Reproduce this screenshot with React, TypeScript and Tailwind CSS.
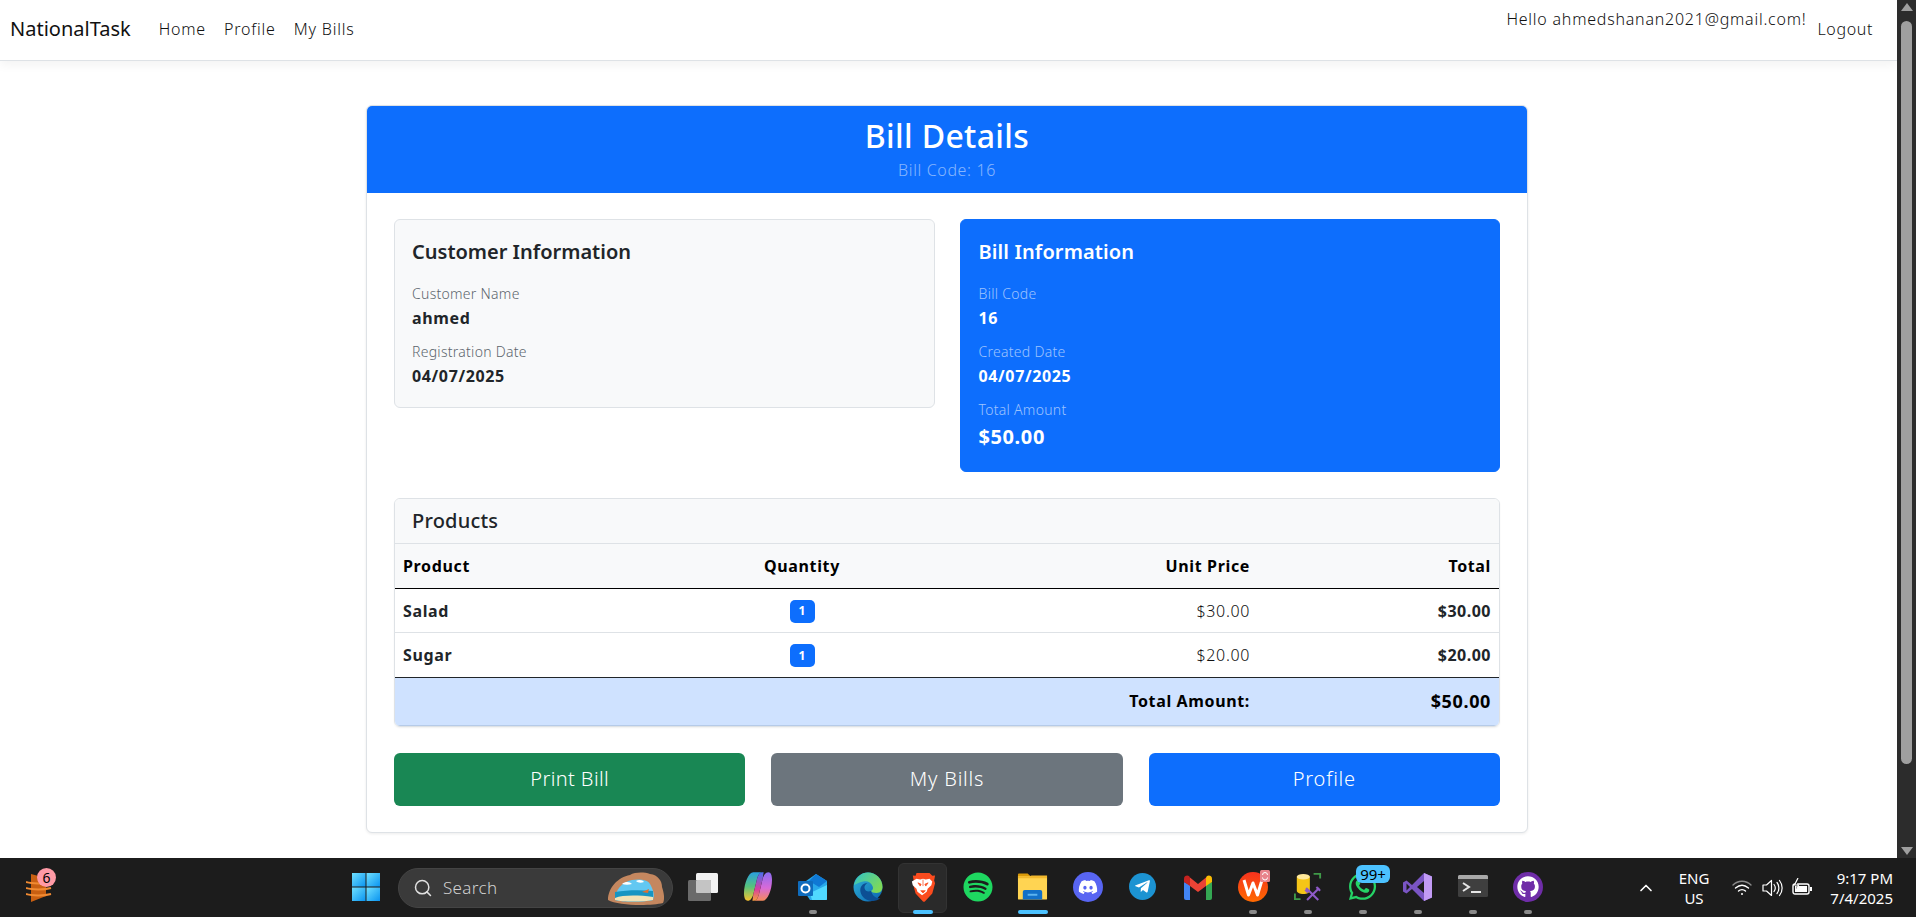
import React from "react";
import { FaDiscord, FaGithub, FaSpotify, FaTelegramPlane, FaWhatsapp } from "react-icons/fa";
import { Search, ChevronUp } from "lucide-react";

const Pip = ({ cls = "w-2 bg-[#8a8a8a]" }: { cls?: string }) => (
  <span className={`absolute bottom-[3px] left-1/2 h-[4px] -translate-x-1/2 rounded-full ${cls}`} />
);

const Slot = ({ children, pip = false, pipCls, active = false }: { children: React.ReactNode; pip?: boolean; pipCls?: string; active?: boolean }) => (
  <div className="relative flex h-[59px] w-[55px] shrink-0 items-center justify-center pb-[2px]">
    {active && <span className="absolute left-[3px] top-[5px] h-[50px] w-[49px] rounded-md border border-[#333] bg-[#2a2a2a]" />}
    <span className="relative flex">{children}</span>
    {pip && <Pip />}
    {pipCls && <Pip cls={pipCls} />}
  </div>
);

const StartIcon = () => (
  <svg width="30" height="30" viewBox="0 0 30 30">
    <defs>
      <linearGradient id="st" x1="0" y1="0" x2="1" y2="1">
        <stop offset="0" stopColor="#6fe0ff" />
        <stop offset="1" stopColor="#0a94f0" />
      </linearGradient>
    </defs>
    <rect x="1" y="1" width="13.5" height="13.5" fill="url(#st)" />
    <rect x="15.5" y="1" width="13.5" height="13.5" fill="url(#st)" />
    <rect x="1" y="15.5" width="13.5" height="13.5" fill="url(#st)" />
    <rect x="15.5" y="15.5" width="13.5" height="13.5" fill="url(#st)" />
  </svg>
);

const TaskView = () => (
  <svg width="30" height="30" viewBox="0 0 30 30">
    <rect x="8" y="1" width="22" height="20" rx="1.5" fill="#f2f2f2" />
    <rect x="0" y="8" width="23" height="21" rx="1.5" fill="#6a6a6a" />
    <rect x="8" y="8" width="15" height="13" rx="1" fill="#c4c4c4" />
  </svg>
);

const Copilot = () => (
  <svg width="28" height="33" viewBox="0 0 30 30" preserveAspectRatio="none">
    <defs>
      <linearGradient id="co1" x1="0" y1="0" x2="0" y2="1">
        <stop offset="0" stopColor="#2a9fe0" />
        <stop offset="0.5" stopColor="#55c27c" />
        <stop offset="1" stopColor="#f8c22e" />
      </linearGradient>
      <linearGradient id="co2" x1="0" y1="0" x2="0" y2="1">
        <stop offset="0" stopColor="#8a6cf2" />
        <stop offset="0.55" stopColor="#d86ad8" />
        <stop offset="1" stopColor="#f58a5a" />
      </linearGradient>
      <linearGradient id="co3" x1="0" y1="0" x2="0" y2="1">
        <stop offset="0" stopColor="#4a6ff0" />
        <stop offset="0.6" stopColor="#d8409e" />
        <stop offset="1" stopColor="#f5a03a" />
      </linearGradient>
    </defs>
    <path d="M10 2h9c-3 1-4 3-5 6l-4 14c-1 3-3 6-6 6-3 0-4-3-4-7C0 12 5 2 10 2z" fill="url(#co1)" />
    <path d="M20 28h-9c3-1 4-3 5-6l4-14c1-3 3-6 6-6 3 0 4 3 4 7 0 9-5 19-10 19z" fill="url(#co2)" />
    <path d="M14 8c1-3 2-5 5-6h2l-1 6-4 14c-1 3-2 5-5 6H9l1-6z" fill="url(#co3)" />
  </svg>
);

const Outlook = () => (
  <svg width="30" height="30" viewBox="0 0 30 30">
    <path d="M8 9l10-7 11 7v18a1 1 0 0 1-1 1H12l-4-6z" fill="#28a8ea" />
    <path d="M18 2l11 7-8 6-10-6z" fill="#0f78d4" />
    <path d="M12 21l17-8v14a1 1 0 0 1-1 1H14z" fill="#50d9ff" />
    <rect x="0" y="9" width="15" height="15" rx="1" fill="#0f6cbd" />
    <circle cx="7.5" cy="16.5" r="4" fill="none" stroke="#fff" strokeWidth="2" />
  </svg>
);

const Edge = () => (
  <svg width="30" height="30" viewBox="0 0 30 30">
    <defs>
      <linearGradient id="ed" x1="0" y1="0" x2="1" y2="1">
        <stop offset="0" stopColor="#2fb6d8" />
        <stop offset="1" stopColor="#0b62b0" />
      </linearGradient>
      <linearGradient id="ed2" x1="0" y1="0" x2="1" y2="0.6">
        <stop offset="0" stopColor="#30c3c8" />
        <stop offset="1" stopColor="#7ed957" />
      </linearGradient>
    </defs>
    <circle cx="15" cy="15" r="14.5" fill="url(#ed)" />
    <path d="M1 13C3 5 9 .5 15 .5 23 .5 29.5 7 29.5 15c0 3-2 6-6 6-3 0-5-1-5.500-2 2-1 2.500-3 1.500-5C18 10 14 8.500 10 9.500 6 10.500 3 12 1 13z" fill="url(#ed2)" />
    <path d="M18 19c-2.500 1-6 .5-6.500-3-.2-2 1-4 3-5-5 0-8 4-7 9 1 5 6 9 12 9 3 0 6-1 8-3-4 1-8-2-9.500-7z" fill="#0c4f94" />
  </svg>
);

const Brave = () => (
  <svg width="26" height="32" viewBox="0 0 28 32">
    <path d="M7 1h14l3 3 3-.5-1 5.500 1 3-3 11-8 8.500a1.500 1.500 0 0 1-2 0l-8-8.500-3-11 1-3-1-5.500 3 .5z" fill="#fb4b1e" />
    <path d="M7 7l4 1 3-1 3 1 4-1 3 3-1 4-4 4-1 3-5 4-5-4-1-3-4-4-1-4z" fill="#fff" />
    <path d="M8.500 11.500l3.500 1.500-1 2zM19.500 11.500L16 13l1 2zM14 8v7M11.500 20h5L14 22.500z" fill="#fb4b1e" stroke="#fb4b1e" strokeWidth="0.8" />
  </svg>
);

const Explorer = () => (
  <svg width="31" height="32" viewBox="0 0 32 32">
    <path d="M1 3a1 1 0 0 1 1-1h9l3 3h16a1 1 0 0 1 1 1v5H1z" fill="#d99a0a" />
    <path d="M1 5h30v23a1 1 0 0 1-1 1H2a1 1 0 0 1-1-1z" fill="#ffd452" />
    <path d="M1 5h12l2-1h16v3H1z" fill="#f1b82d" />
    <path d="M6 31V21a2 2 0 0 1 2-2h16a2 2 0 0 1 2 2v8H6z" fill="#1270c8" />
    <rect x="11" y="23" width="10" height="2" fill="#5db4ef" />
  </svg>
);

const Gmail = () => (
  <svg width="30" height="30" viewBox="0 0 30 30">
    <path d="M1 10v16a2 2 0 0 0 2 2h4V13z" fill="#4285f4" />
    <path d="M23 13v15h4a2 2 0 0 0 2-2V10z" fill="#34a853" />
    <path d="M7 5.500L15 12l8-6.500V14l-8 6-8-6z" fill="#ea4335" />
    <path d="M1 10V6.500c0-2.500 3-4 5-2.500l1 1.500V14z" fill="#c5221f" />
    <path d="M23 5.500L24 4c2-1.500 5 0 5 2.500V10l-6 4z" fill="#fbbc04" />
  </svg>
);

const Wps = () => (
  <svg width="30" height="30" viewBox="0 0 30 30" className="overflow-visible">
    <defs>
      <linearGradient id="wp" x1="0" y1="0" x2="0" y2="1">
        <stop offset="0" stopColor="#f5321e" />
        <stop offset="1" stopColor="#ff6a00" />
      </linearGradient>
    </defs>
    <circle cx="15" cy="15" r="15" fill="url(#wp)" />
    <path d="M6 8l4.500 15L15 11l4.500 12L24 8" fill="none" stroke="#fff" strokeWidth="3" strokeLinejoin="round" />
    <rect x="22" y="-2" width="10" height="12" rx="1.500" fill="#e8848c" />
    <path d="M24.500 3a2.500 2.500 0 0 1 5 0M29.500 5.500a2.500 2.500 0 0 1-5 0" fill="none" stroke="#fff" strokeWidth="1" />
  </svg>
);

const DbTool = () => (
  <svg width="28" height="32" viewBox="0 0 30 32">
    <path d="M21 2h7v5M1 23v6h6" fill="none" stroke="#3f9a48" strokeWidth="2" />
    <path d="M3 5v15c0 2 3 3.500 7 3.500s7-1.500 7-3.500V5z" fill="#f5c518" />
    <ellipse cx="10" cy="5" rx="7" ry="3" fill="#ffe89a" />
    <path d="M13 17l13 13M27 17L14 30M24 16l4 4M12 19l3 3" stroke="#8e5ac8" strokeWidth="2.200" fill="none" />
  </svg>
);

const VisualStudio = () => (
  <svg width="30" height="30" viewBox="0 0 30 30">
    <path d="M21 1l8 3.500v21L21 29 9 17l-5.500 4.500L0 19.500v-9L3.500 8.500 9 13z" fill="#7a55c4" />
    <path d="M21 1l8 3.500v21L21 29z" fill="#c29bf5" />
    <path d="M21 9l-7 6 7 6z" fill="#1c1c1c" />
    <path d="M3.500 11.500v7L7 15z" fill="#1c1c1c" />
  </svg>
);

const Terminal = () => (
  <svg width="30" height="24" viewBox="0 0 30 24">
    <rect x="0" y="0" width="30" height="22" rx="1.500" fill="#3f3f3f" />
    <path d="M1.500 0h27A1.500 1.500 0 0 1 30 1.500V4H0V1.500A1.500 1.500 0 0 1 1.500 0z" fill="#a8a8a8" />
    <path d="M5 8l6 4-6 4" fill="none" stroke="#e6e6e6" strokeWidth="2" />
    <rect x="13" y="16" width="10" height="2" fill="#e6e6e6" />
  </svg>
);

const Beach = () => (
  <svg width="60" height="34" viewBox="0 0 60 34">
    <path d="M2 28C2 16 12 5 24 3c5-3 14-3 20-1 8 1 12 7 12 13 2 6 3 12 1 16-12 3-45 3-55-3z" fill="#c4875f" />
    <path d="M9 28c0-10 7-18 17-20 6-1 15-1 18 4 3 5 5 11 3 16-10 2-30 2-38 0z" fill="#62c8f2" />
    <path d="M9 20c12-2 26-2 38-1v9c-10 2-30 2-38 0z" fill="#1795c2" />
    <path d="M16 12c4-3 8-2 10 0-3 1-7 1-10 0zM30 9c3-2 7-1 8 1-3 1-6 1-8-1z" fill="#fff" />
    <path d="M9 26c8-3 22-3 38-1v3c-10 2-30 2-38 0z" fill="#f2e2b6" />
    <path d="M36 20l7-3-1 4z" fill="#e0702f" />
  </svg>
);

const Widget = () => (
  <div className="relative ml-[26px] h-[30px] w-[26px]">
    <svg width="26" height="30" viewBox="0 0 26 30">
      <path d="M5 1l15 4v18L5 29z" fill="#c85f12" />
      <path d="M0 9c6 2 18 2 25 0M0 15c6 2 18 2 25 0M0 21c6 2 18 2 25 0" stroke="#f08a32" strokeWidth="2" fill="none" />
    </svg>
    <span className="absolute -top-[5px] left-[11px] flex h-[19px] w-[19px] items-center justify-center rounded-full bg-[#ff9aa6] text-[14px] text-black">6</span>
  </div>
);

const WifiIcon = () => (
  <svg width="20" height="18" viewBox="0 0 20 18" fill="none" stroke="#fff" strokeWidth="1.400" strokeLinecap="round">
    <path d="M1 6c5-5 13-5 18 0" stroke="#8a8a8a" />
    <path d="M3.500 9c4-3.500 9-3.500 13 0" />
    <path d="M6.500 12c2-1.800 5-1.800 7 0" />
    <circle cx="10" cy="15" r="1" fill="#fff" stroke="none" />
  </svg>
);

const SpeakerIcon = () => (
  <svg width="21" height="20" viewBox="0 0 21 20" fill="none" stroke="#fff" strokeWidth="1.200">
    <path d="M1 7h3.500L9.500 2.500v15L4.500 13H1z" strokeLinejoin="round" />
    <path d="M12 6.500c1.500 2 1.500 5 0 7M15 4.500c2.500 3 2.500 8 0 11" strokeLinecap="round" />
    <path d="M17.500 2.500c3.500 4.500 3.500 10.500 0 15" strokeLinecap="round" />
  </svg>
);

const BatteryIcon = () => (
  <svg width="21" height="20" viewBox="0 0 21 20" fill="none" stroke="#fff" strokeWidth="1.400">
    <rect x="1" y="6" width="16" height="10" rx="2" />
    <rect x="18" y="9" width="2" height="4" fill="#fff" stroke="none" />
    <rect x="3" y="8" width="12" height="6" fill="#fff" stroke="none" />
    <path d="M6 0L2.500 7H6.500L4 13" stroke="#fff" strokeWidth="1.200" fill="#1c1c1c" />
  </svg>
);

const Field = ({ label, value, tone, big = false }: { label: string; value: string; tone: "light" | "dark"; big?: boolean }) => (
  <div className="mb-[11px]">
    <div className={`mb-[2px] text-[14px] leading-[21px] font-light tracking-[0.02em] ${tone === "light" ? "text-[#5c656d]" : "text-white/60"}`}>{label}</div>
    <div className={`font-bold ${big ? "text-[20px] leading-[30px] tracking-[0.03em]" : "text-[16px] leading-[24px] tracking-[0.04em]"} ${tone === "light" ? "text-[#212529]" : "text-white"}`}>{value}</div>
  </div>
);

const Row = ({ name, price, last = false }: { name: string; price: string; last?: boolean }) => (
  <tr className={`border-b ${last ? "h-[45px] border-[#212529]" : "h-[44px] border-[#dee2e6]"}`}>
    <td className="px-2 pt-[1px] font-bold tracking-[0.04em]">{name}</td>
    <td className="px-2 text-center">
      <span className="inline-flex h-[23px] w-[25px] items-center justify-center rounded-[5px] bg-[#0d6efd] text-[12px] font-bold text-white">1</span>
    </td>
    <td className="px-2 pt-[1px] text-right font-light tracking-[0.04em] text-[#111]">{price}</td>
    <td className="px-2 pt-[1px] text-right font-bold tracking-[0.03em]">{price}</td>
  </tr>
);

export default function App() {
  return (
    <div className="flex h-[917px] flex-col overflow-hidden bg-white font-['Noto_Sans',sans-serif] text-[16px] text-[#212529]">
      <div className="flex h-[858px] shrink-0">
        <div className="min-w-0 flex-1">
          <nav className="flex h-[61px] items-start border-b border-[#dee2e6] bg-white shadow-[0_4px_10px_rgba(0,0,0,0.05)]">
            <a className="ml-[10px] mt-[14px] text-[20px] leading-[30px] text-[#111]">NationalTask</a>
            <div className="ml-[28px] mt-[17px] flex gap-[18px] leading-[24px] font-light tracking-[0.05em] text-[#111]">
              <a>Home</a>
              <a>Profile</a>
              <a>My Bills</a>
            </div>
            <div className="ml-auto mr-[24px] flex items-start text-[#111]">
              <span className="mt-[7px] font-light leading-[24px] tracking-[0.048em]">Hello ahmedshanan2021@gmail.com!</span>
              <a className="ml-[11px] mt-[17px] font-light leading-[24px] tracking-[0.04em]">Logout</a>
            </div>
          </nav>
          <main className="ml-[366px] mt-[44px] w-[1162px] overflow-hidden rounded-md border border-[#dee2e6] bg-white shadow-[0_1px_3px_rgba(0,0,0,0.08)]">
            <header className="h-[87px] bg-[#0d6efd] pt-[11px] text-center text-white">
              <h1 className="text-[32px] leading-[38px] font-medium tracking-[0.011em]">Bill Details</h1>
              <p className="mt-[3px] text-[16px] leading-[24px] font-light tracking-[0.04em] text-white/50">Bill Code: 16</p>
            </header>
            <div className="px-[27px] pb-[26px] pt-[26px]">
              <div className="grid grid-cols-2 items-start gap-[25px]">
                <section className="rounded-md border border-[#dee2e6] bg-[#f8f9fa] px-[17px] pb-[8px] pt-[20px]">
                  <h2 className="mb-[19px] text-[20px] leading-[24px] font-semibold">Customer Information</h2>
                  <Field tone="light" label="Customer Name" value="ahmed" />
                  <Field tone="light" label="Registration Date" value="04/07/2025" />
                </section>
                <section className="rounded-md border border-[#0d6efd] bg-[#0d6efd] px-[18px] pb-[8px] pt-[20px] text-white">
                  <h2 className="mb-[19px] text-[20px] leading-[24px] font-semibold tracking-[0.006em]">Bill Information</h2>
                  <Field tone="dark" label="Bill Code" value="16" />
                  <Field tone="dark" label="Created Date" value="04/07/2025" />
                  <Field tone="dark" label="Total Amount" value="$50.00" big />
                </section>
              </div>
              <section className="mt-[26px] overflow-hidden rounded-md border border-[#dee2e6] shadow-[0_1px_2px_rgba(0,0,0,0.06)]">
                <div className="h-[45px] border-b border-[#dee2e6] bg-[#f8f9fa] pl-[17px] pt-[10px] text-[20px] leading-[24px] font-medium tracking-[0.01em]">Products</div>
                <table className="w-full table-fixed border-collapse text-[16px]">
                  <colgroup>
                    <col className="w-[276px]" />
                    <col className="w-[262px]" />
                    <col className="w-[325px]" />
                    <col />
                  </colgroup>
                  <thead>
                    <tr className="h-[44px] border-b border-black bg-[#f8f9fa] text-black">
                      <th className="px-2 text-left font-bold tracking-[0.04em]">Product</th>
                      <th className="px-2 text-center font-bold tracking-[0.04em]">Quantity</th>
                      <th className="px-2 text-right font-bold tracking-[0.04em]">Unit Price</th>
                      <th className="px-2 text-right font-bold tracking-[0.04em]">Total</th>
                    </tr>
                  </thead>
                  <tbody>
                    <Row name="Salad" price="$30.00" />
                    <Row name="Sugar" price="$20.00" last />
                  </tbody>
                  <tfoot>
                    <tr className="h-[48px] border-b border-[#b6cbe8] bg-[#cfe2ff] text-black">
                      <td colSpan={3} className="px-2 text-right font-bold tracking-[0.04em]">Total Amount:</td>
                      <td className="px-2 text-right text-[18px] font-bold tracking-[0.035em]">$50.00</td>
                    </tr>
                  </tfoot>
                </table>
              </section>
              <div className="mt-[26px] grid grid-cols-3 gap-[26px]">
                <a className="flex h-[53px] items-center justify-center rounded-md bg-[#198754] text-[20px] font-light tracking-[0.02em] text-white">Print Bill</a>
                <a className="flex h-[53px] items-center justify-center rounded-md bg-[#6c757d] text-[20px] font-light tracking-[0.04em] text-white">My Bills</a>
                <a className="flex h-[53px] items-center justify-center rounded-md bg-[#0d6efd] text-[20px] font-light tracking-[0.04em] text-white">Profile</a>
              </div>
            </div>
          </main>
        </div>
        <aside className="flex w-[19px] shrink-0 flex-col items-center bg-[#2c2c2c]">
          <span className="mt-[3px] h-0 w-0 border-x-[6px] border-b-[8px] border-x-transparent border-b-[#9f9f9f]" />
          <span className="mt-[10px] h-[743px] w-[11px] rounded-full bg-[#9f9f9f]" />
          <span className="mt-auto mb-[3px] h-0 w-0 border-x-[6px] border-t-[8px] border-x-transparent border-t-[#9f9f9f]" />
        </aside>
      </div>
      <footer className="flex h-[59px] shrink-0 items-center bg-[#1c1c1c] text-white">
        <div className="flex w-[338px] shrink-0 items-center"><Widget /></div>
        <Slot><StartIcon /></Slot>
        <div className="relative ml-[5px] flex h-[40px] w-[275px] shrink-0 items-center rounded-full border border-[#444] bg-[#3a3a3a] pl-[14px]">
          <Search size={20} strokeWidth={1.8} className="text-[#e0e0e0]" />
          <span className="ml-[10px] text-[17px] font-light tracking-[0.02em] text-[#d0d0d0]">Search</span>
          <span className="absolute right-[6px] top-[3px]"><Beach /></span>
        </div>
        <div className="ml-[2px] flex">
          <Slot><TaskView /></Slot>
          <Slot><Copilot /></Slot>
          <Slot pip><Outlook /></Slot>
          <Slot><Edge /></Slot>
          <Slot active pipCls="w-[20px] bg-[#4cc2ff]"><Brave /></Slot>
          <Slot><FaSpotify size={30} color="#1ed760" /></Slot>
          <Slot pipCls="w-[30px] bg-[#4cc2ff]"><Explorer /></Slot>
          <Slot>
            <span className="flex h-[30px] w-[30px] items-center justify-center rounded-full bg-[#5865f2]"><FaDiscord size={20} color="#fff" /></span>
          </Slot>
          <Slot>
            <span className="flex h-[27px] w-[27px] items-center justify-center rounded-full bg-[#1c93d2]"><FaTelegramPlane size={17} color="#fff" /></span>
          </Slot>
          <Slot><Gmail /></Slot>
          <Slot pip><Wps /></Slot>
          <Slot pip><DbTool /></Slot>
          <Slot pip>
            <FaWhatsapp size={31} color="#25d366" />
            <span className="absolute -top-[6px] left-[9px] flex h-[18px] w-[34px] items-center justify-center rounded-[6px] bg-[#4cc2ff] text-[15px] leading-none text-black">99+</span>
          </Slot>
          <Slot pip><VisualStudio /></Slot>
          <Slot pip><Terminal /></Slot>
          <Slot pip>
            <span className="flex h-[30px] w-[30px] items-center justify-center rounded-full bg-[#6f2da8]"><FaGithub size={22} color="#fff" /></span>
          </Slot>
        </div>
        <ChevronUp size={20} strokeWidth={2} className="ml-[81px] shrink-0" />
        <div className="ml-[13px] w-[50px] shrink-0 text-center text-[15px] leading-[20px]">
          <div>ENG</div>
          <div>US</div>
        </div>
        <div className="ml-[8px] flex shrink-0 items-center">
          <span className="flex w-[30px] justify-center"><WifiIcon /></span>
          <span className="flex w-[30px] justify-center"><SpeakerIcon /></span>
          <span className="flex w-[30px] justify-center"><BatteryIcon /></span>
        </div>
        <div className="ml-auto mr-[23px] text-right text-[15px] leading-[20px]">
          <div>9:17 PM</div>
          <div>7/4/2025</div>
        </div>
      </footer>
    </div>
  );
}
